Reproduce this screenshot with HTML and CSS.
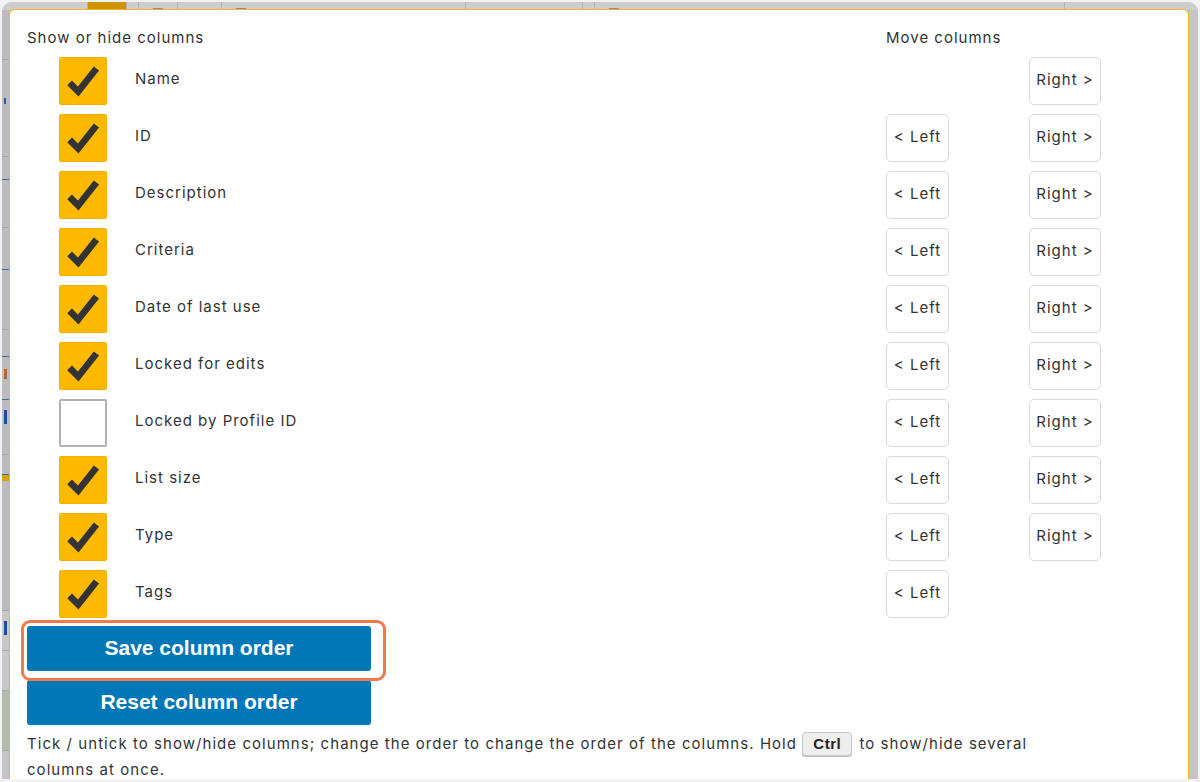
FILE: index.html
```html
<!DOCTYPE html>
<html>
<head>
<meta charset="utf-8">
<link rel="stylesheet" href="styles.css">
</head>
<body>
<div class="screen">
  <div class="page">
    <div class="thead">
      <div class="th w86"></div>
      <div class="th th-yellow w39"></div>
      <div class="th w12"></div>
      <div class="th w39"><span class="frag"></span></div>
      <div class="th w44"></div>
      <div class="th w244"><span class="frag"></span></div>
      <div class="th w117"></div>
      <div class="th w12"></div>
      <div class="th w470"><span class="frag"></span></div>
      <div class="th wrest"></div>
    </div>
    <div class="side">
      <div class="side-row h50"></div>
      <div class="side-row h97"><span class="blue-dot"></span></div>
      <div class="side-row h23 blue-line"></div>
      <div class="side-row h48"></div>
      <div class="side-row h42 blue-line"></div>
      <div class="side-row h60"></div>
      <div class="side-row h27 blue-line"></div>
      <div class="side-row h43 blue-line"><span class="orange-dot"></span></div>
      <div class="side-row h55"><span class="blue-mark"></span></div>
      <div class="side-row h20 blue-line"></div>
      <div class="side-row h6 yellow"></div>
      <div class="side-row h130"></div>
      <div class="side-row h40 light"><span class="blue-mark"></span></div>
      <div class="side-row h40 light"></div>
      <div class="side-row h60 green"></div>
    </div>
  </div>

  <div class="modal">
    <div class="head">
      <div class="head-left">Show or hide columns</div>
      <div class="head-right">Move columns</div>
    </div>

    <div class="rows">
      <div class="row">
        <span class="box on"><svg viewBox="0 0 48 48"><path d="M10 26 L19 35 L38 11"/></svg></span>
        <span class="label">Name</span>
        <span class="cell-left"></span>
        <span class="cell-right"><span class="mbtn right">Right &gt;</span></span>
      </div>
      <div class="row">
        <span class="box on"><svg viewBox="0 0 48 48"><path d="M10 26 L19 35 L38 11"/></svg></span>
        <span class="label">ID</span>
        <span class="cell-left"><span class="mbtn left">&lt; Left</span></span>
        <span class="cell-right"><span class="mbtn right">Right &gt;</span></span>
      </div>
      <div class="row">
        <span class="box on"><svg viewBox="0 0 48 48"><path d="M10 26 L19 35 L38 11"/></svg></span>
        <span class="label">Description</span>
        <span class="cell-left"><span class="mbtn left">&lt; Left</span></span>
        <span class="cell-right"><span class="mbtn right">Right &gt;</span></span>
      </div>
      <div class="row">
        <span class="box on"><svg viewBox="0 0 48 48"><path d="M10 26 L19 35 L38 11"/></svg></span>
        <span class="label">Criteria</span>
        <span class="cell-left"><span class="mbtn left">&lt; Left</span></span>
        <span class="cell-right"><span class="mbtn right">Right &gt;</span></span>
      </div>
      <div class="row">
        <span class="box on"><svg viewBox="0 0 48 48"><path d="M10 26 L19 35 L38 11"/></svg></span>
        <span class="label">Date of last use</span>
        <span class="cell-left"><span class="mbtn left">&lt; Left</span></span>
        <span class="cell-right"><span class="mbtn right">Right &gt;</span></span>
      </div>
      <div class="row">
        <span class="box on"><svg viewBox="0 0 48 48"><path d="M10 26 L19 35 L38 11"/></svg></span>
        <span class="label">Locked for edits</span>
        <span class="cell-left"><span class="mbtn left">&lt; Left</span></span>
        <span class="cell-right"><span class="mbtn right">Right &gt;</span></span>
      </div>
      <div class="row">
        <span class="box off"></span>
        <span class="label">Locked by Profile ID</span>
        <span class="cell-left"><span class="mbtn left">&lt; Left</span></span>
        <span class="cell-right"><span class="mbtn right">Right &gt;</span></span>
      </div>
      <div class="row">
        <span class="box on"><svg viewBox="0 0 48 48"><path d="M10 26 L19 35 L38 11"/></svg></span>
        <span class="label">List size</span>
        <span class="cell-left"><span class="mbtn left">&lt; Left</span></span>
        <span class="cell-right"><span class="mbtn right">Right &gt;</span></span>
      </div>
      <div class="row">
        <span class="box on"><svg viewBox="0 0 48 48"><path d="M10 26 L19 35 L38 11"/></svg></span>
        <span class="label">Type</span>
        <span class="cell-left"><span class="mbtn left">&lt; Left</span></span>
        <span class="cell-right"><span class="mbtn right">Right &gt;</span></span>
      </div>
      <div class="row">
        <span class="box on"><svg viewBox="0 0 48 48"><path d="M10 26 L19 35 L38 11"/></svg></span>
        <span class="label">Tags</span>
        <span class="cell-left"><span class="mbtn left">&lt; Left</span></span>
        <span class="cell-right"></span>
      </div>
    </div>

    <div class="actions">
      <div class="save-wrap">
        <button class="primary">Save column order</button>
        <span class="highlight"></span>
      </div>
      <button class="primary">Reset column order</button>
    </div>

    <p class="help">Tick / untick to show/hide columns; change the order to change the order of the columns. Hold <kbd>Ctrl</kbd> to show/hide several columns at once.</p>
  </div>
</div>
</body>
</html>
```

FILE: styles.css
```css
* { box-sizing: border-box; }
html, body { margin: 0; padding: 0; }
body {
  background: #f2f2f2;
  width: 1200px;
  height: 782px;
  overflow: hidden;
  font-family: "Inter", "Noto Sans", sans-serif;
}
.screen {
  position: relative;
  margin: 2px 2px 0 2px;
  width: 1196px;
  height: 777px;
  background: #c4c4c4;
  border-radius: 10px 10px 0 0;
  overflow: hidden;
}
.page {
  display: flex;
  flex-direction: column;
}
.thead {
  display: flex;
  height: 8px;
  background: #cdcdcd;
}
.th {
  height: 8px;
  border-right: 1px solid #b4b4b4;
  position: relative;
}
.th-yellow { background: #cf9500; }
.w86 { width: 86px; }
.w39 { width: 39px; }
.w12 { width: 12px; }
.w44 { width: 44px; }
.w244 { width: 244px; }
.w117 { width: 117px; }
.w470 { width: 470px; }
.wrest { flex: 1; }
.frag {
  position: absolute;
  left: 14px;
  bottom: 0;
  width: 10px;
  height: 2px;
  background: #888;
}
.side {
  width: 7px;
  display: flex;
  flex-direction: column;
}
.side-row {
  border-bottom: 1px solid #a9a9a9;
  background: #bcbcbc;
  position: relative;
  overflow: hidden;
}
.side-row.blue-line { border-bottom: 1px solid #2f6fb0; }
.side-row.yellow { background: #d9a000; border-bottom: none; }
.side-row.light { background: #c8c8c8; }
.side-row.green { background: #b3bcaa; }
.h6 { height: 6px; } .h20 { height: 20px; } .h23 { height: 23px; } .h27 { height: 27px; }
.h40 { height: 40px; } .h42 { height: 42px; } .h43 { height: 43px; } .h48 { height: 48px; }
.h50 { height: 50px; } .h55 { height: 55px; } .h60 { height: 60px; } .h97 { height: 97px; }
.h130 { height: 130px; }
.blue-dot { position: absolute; left: 2px; top: 38px; width: 2px; height: 6px; background: #2a5fa0; }
.orange-dot { position: absolute; left: 2px; top: 12px; width: 3px; height: 10px; background: #b06a30; }
.blue-mark { position: absolute; left: 2px; top: 10px; width: 3px; height: 14px; background: #1f4f9a; }

.modal {
  position: absolute;
  left: 7px;
  top: 7px;
  width: 1180px;
  height: 790px;
  background: #fff;
  border: 1px solid #f6b42a;
  border-radius: 6px 6px 0 0;
  padding: 18px 0 0 17px;
  color: #333;
  font-size: 15px;
  letter-spacing: 1px;
}
.head {
  display: flex;
  height: 20px;
  line-height: 20px;
  margin-bottom: 9px;
}
.head-left { width: 859px; }

.rows {
  display: flex;
  flex-direction: column;
  gap: 9px;
}
.row {
  display: grid;
  grid-template-columns: 32px 48px 28px 751px 143px 72px;
  height: 48px;
  align-items: center;
}
.box {
  grid-column: 2;
  width: 48px;
  height: 48px;
  border-radius: 2px;
  display: block;
}
.box.on {
  background: #ffba00;
  border: 1px solid #f4b000;
}
.box.on svg {
  display: block;
  width: 46px;
  height: 46px;
}
.box.on path {
  fill: none;
  stroke: #333;
  stroke-width: 7;
  stroke-linejoin: miter;
}
.box.off {
  background: #fff;
  border: 2px solid #b3b3b3;
}
.label {
  grid-column: 4;
  margin-top: -6px;
}
.cell-left { grid-column: 5; }
.cell-right { grid-column: 6; }
.mbtn {
  display: flex;
  align-items: center;
  justify-content: center;
  height: 48px;
  border: 1px solid #d9d9d9;
  border-radius: 5px;
  background: #fff;
  color: #333;
  font-size: 15px;
  padding-bottom: 4px;
}
.mbtn.left { width: 63px; }
.mbtn.right { width: 72px; }

.actions {
  margin-top: 8px;
  display: flex;
  flex-direction: column;
  gap: 9px;
  width: 344px;
}
.save-wrap { position: relative; }
.primary {
  display: block;
  width: 344px;
  height: 45px;
  border: none;
  border-radius: 3px;
  background: #0277b8;
  color: #fff;
  font-family: "Liberation Sans", Arial, sans-serif;
  font-weight: 700;
  font-size: 21px;
  letter-spacing: 0;
  padding: 0 0 2px 0;
  margin: 0;
}
.highlight {
  position: absolute;
  left: -6px;
  top: -6px;
  width: 365px;
  height: 61px;
  border: 3px solid #f07a4c;
  border-radius: 9px;
}
.help {
  margin: 6px 0 0 0;
  width: 1012px;
  line-height: 26px;
  font-size: 15px;
  letter-spacing: 1.05px;
  color: #333;
}
kbd {
  display: inline-block;
  vertical-align: top;
  margin: 1px 2px 0 0;
  font-family: "Liberation Sans", Arial, sans-serif;
  font-weight: 700;
  font-size: 15px;
  letter-spacing: 0.5px;
  line-height: 22px;
  padding: 0 10px;
  background: #eee;
  border: 1px solid #c8c8c8;
  border-radius: 4px;
  box-shadow: 0 1px 0 #bbb;
  color: #222;
}
```
